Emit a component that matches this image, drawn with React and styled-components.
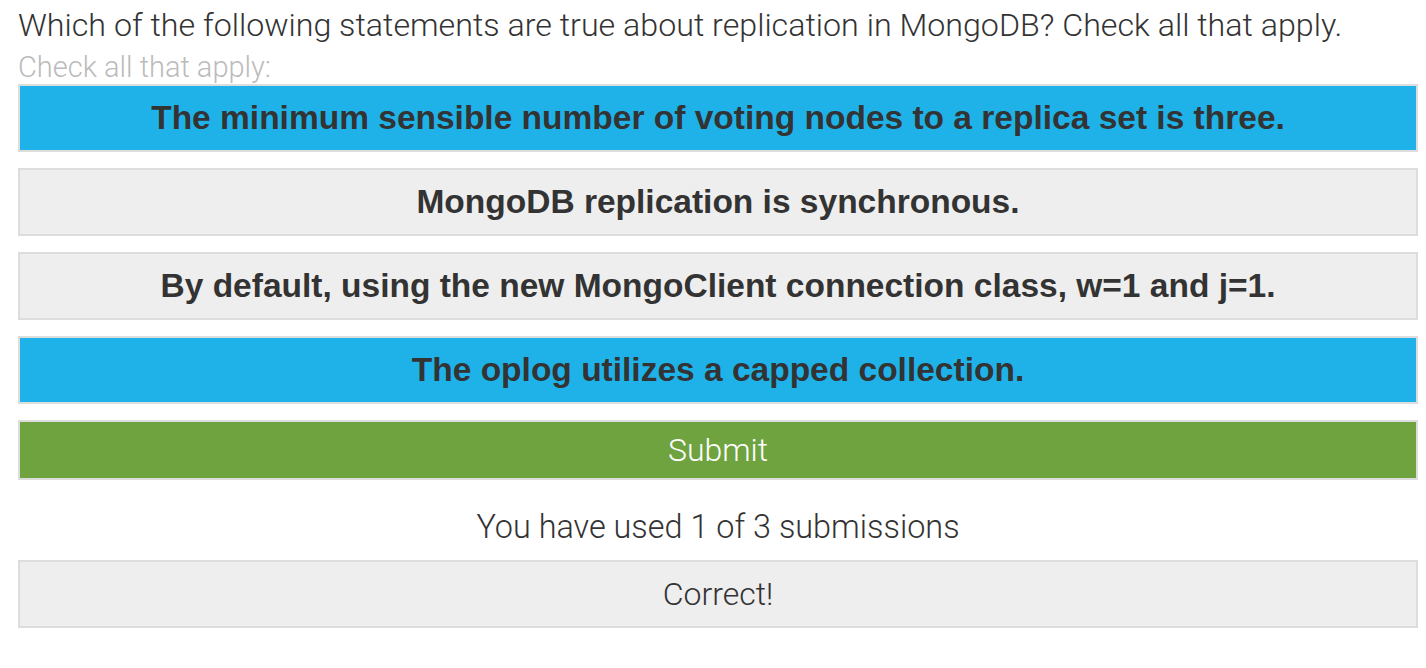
import React from 'react'
import styled, {createGlobalStyle} from 'styled-components'

const GlobalStyle = createGlobalStyle`
  body {
    margin: 0;
    background: #fff;
    font-family: Roboto, "Liberation Sans", Arial, sans-serif;
    font-weight: 300;
    color: #333;
  }
`

const Page = styled.div`
  padding: 0 8px 0 18px;
`

const Question = styled.h2`
  margin: 0;
  font-size: 32.2px;
  font-weight: 300;
  line-height: 50px;
  color: #333;
`

const Hint = styled.p`
  margin: 0;
  font-size: 29px;
  line-height: 34px;
  color: #bbb;
`

const OptionList = styled.div`
  display: flex;
  flex-direction: column;
  gap: 16px;
`

const Option = styled.button`
  display: flex;
  align-items: center;
  justify-content: center;
  height: 68px;
  border: 2px solid #ddd;
  background-color: ${props => (props.selected ? '#1fb2e9' : '#eee')};
  color: #333;
  font-family: "Liberation Sans", Arial, sans-serif;
  font-size: 33.5px;
  font-weight: bold;
  padding: 0;
`

const SubmitButton = styled.button`
  height: 60px;
  border: 2px solid #ddd;
  background-color: #6fa33f;
  color: #fff;
  font-family: inherit;
  font-weight: 300;
  font-size: 32px;
  padding: 0;
`

const Attempts = styled.p`
  margin: 0;
  height: 80px;
  box-sizing: border-box;
  padding-top: 14px;
  display: flex;
  align-items: center;
  justify-content: center;
  font-size: 32.4px;
  color: #333;
`

const Feedback = styled.div`
  display: flex;
  align-items: center;
  justify-content: center;
  height: 68px;
  box-sizing: border-box;
  border: 2px solid #ddd;
  background: #eee;
  font-size: 32px;
  color: #333;
`

const options = [
  {text: 'The minimum sensible number of voting nodes to a replica set is three.', selected: true},
  {text: 'MongoDB replication is synchronous.', selected: false},
  {text: 'By default, using the new MongoClient connection class, w=1 and j=1.', selected: false},
  {text: 'The oplog utilizes a capped collection.', selected: true},
]

const App = () => (
  <>
    <GlobalStyle />
    <Page>
      <Question>
        Which of the following statements are true about replication in MongoDB? Check all that apply.
      </Question>
      <Hint>Check all that apply:</Hint>
      <OptionList>
        {options.map(option => (
          <Option key={option.text} selected={option.selected}>
            {option.text}
          </Option>
        ))}
        <SubmitButton>Submit</SubmitButton>
      </OptionList>
      <Attempts>You have used 1 of 3 submissions</Attempts>
      <Feedback>Correct!</Feedback>
    </Page>
  </>
)

export default App
